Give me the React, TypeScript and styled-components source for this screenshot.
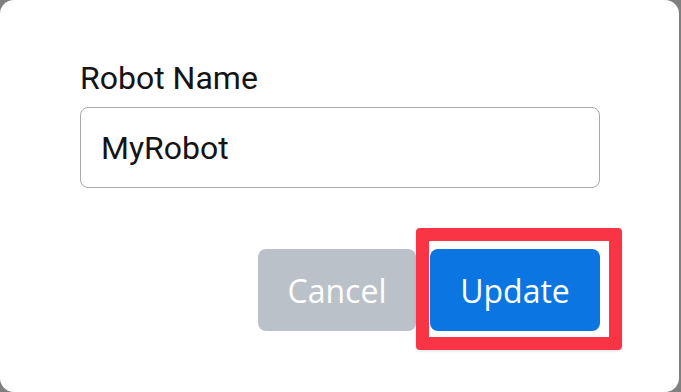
import React from 'react';
import styled, { createGlobalStyle } from 'styled-components';

const GlobalStyle = createGlobalStyle`
  html, body {
    margin: 0;
    padding: 0;
    background: #7f7f7f;
  }
  * {
    box-sizing: border-box;
  }
`;

const Dialog = styled.div`
  width: 679px;
  height: 392px;
  background: #ffffff;
  border-radius: 14px;
  padding: 59px 79px 0 80px;
  display: flex;
  flex-direction: column;
`;

const Label = styled.label`
  font-family: Roboto, "Liberation Sans", sans-serif;
  font-size: 32px;
  line-height: 38px;
  color: #141414;
`;

const NameInput = styled.input`
  margin-top: 10px;
  height: 81px;
  width: 100%;
  border: 1.5px solid #a9a9a9;
  border-radius: 8px;
  padding: 0 20px;
  font-family: Roboto, "Liberation Sans", sans-serif;
  font-size: 32px;
  color: #141414;
  background: #ffffff;
  outline: none;
`;

const Actions = styled.div`
  margin-top: 61px;
  display: flex;
  justify-content: flex-end;
  gap: 14px;
`;

const Button = styled.button<{ $primary?: boolean }>`
  height: 82px;
  width: ${p => (p.$primary ? 170 : 158)}px;
  padding: 0;
  border: none;
  border-radius: 8px;
  font-family: "Open Sans", "Noto Sans", sans-serif;
  font-size: 32px;
  color: #ffffff;
  background: ${p => (p.$primary ? '#0b76e1' : '#bac1c8')};
  cursor: pointer;
`;

const Highlight = styled.div`
  position: relative;
  display: flex;
`;

/* annotation frame drawn over the update button */
const Frame = styled.div`
  position: absolute;
  left: -14px;
  top: -21px;
  right: -22px;
  bottom: -19px;
  border: 13.5px solid #f93444;
  border-radius: 4px;
  box-shadow: 0 1px 3px rgba(0, 0, 0, 0.12);
  pointer-events: none;
`;

export default function App() {
  return (
    <>
      <GlobalStyle />
      <Dialog>
        <Label htmlFor="robot-name">Robot Name</Label>
        <NameInput id="robot-name" defaultValue="MyRobot" />
        <Actions>
          <Button>Cancel</Button>
          <Highlight>
            <Button $primary>Update</Button>
            <Frame />
          </Highlight>
        </Actions>
      </Dialog>
    </>
  );
}
